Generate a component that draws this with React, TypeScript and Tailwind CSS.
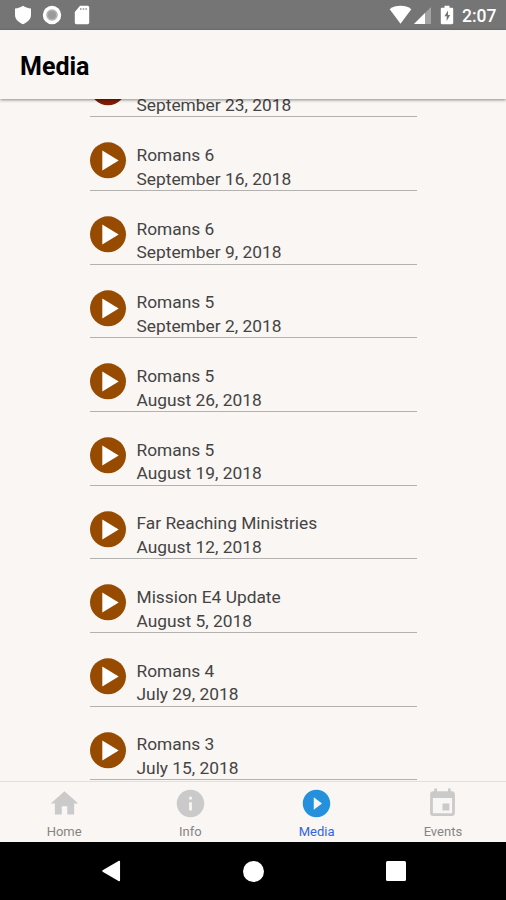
import type { ReactNode } from 'react'

type Sermon = { title: string; date: string }

const SERMONS: Sermon[] = [
  { title: 'Romans 6', date: 'September 23, 2018' },
  { title: 'Romans 6', date: 'September 16, 2018' },
  { title: 'Romans 6', date: 'September 9, 2018' },
  { title: 'Romans 5', date: 'September 2, 2018' },
  { title: 'Romans 5', date: 'August 26, 2018' },
  { title: 'Romans 5', date: 'August 19, 2018' },
  { title: 'Far Reaching Ministries', date: 'August 12, 2018' },
  { title: 'Mission E4 Update', date: 'August 5, 2018' },
  { title: 'Romans 4', date: 'July 29, 2018' },
  { title: 'Romans 3', date: 'July 15, 2018' },
]

function StatusBar() {
  return (
    <div className="flex h-[30px] shrink-0 items-center bg-[#757575] pl-[14px] pr-[8px] text-white">
      <svg width="18" height="20" viewBox="0 0 18 20" fill="#fff">
        <path d="M9 .8C7 2.2 4 3.2 1 3.6V10c0 4.2 3.5 7.4 8 9.2 4.5-1.8 8-5 8-9.2V3.600C14 3.200 11 2.200 9 .8z" />
      </svg>
      <svg className="ml-[10px]" width="20" height="20" viewBox="0 0 20 20">
        <circle cx="10" cy="10" r="9.200" fill="#fff" />
        <circle cx="10" cy="10" r="5.800" fill="#b3b3b3" />
        <circle cx="10" cy="10" r="4" fill="#9b9b9b" />
      </svg>
      <svg className="ml-[12px]" width="16" height="20" viewBox="0 0 16 20">
        <path d="M6 .8h7.500c1 0 1.700.7 1.700 1.700v15c0 1-.7 1.700-1.700 1.700h-11c-1 0-1.700-.7-1.700-1.700V7z" fill="#fff" />
        <path d="M6 3h1.500v2H6zM8.700 3h1.500v2H8.700zM11.400 3h1.500v2h-1.500z" fill="#aaa" />
      </svg>
      <div className="flex-1" />
      <svg width="23" height="20" viewBox="0 0 23 20" fill="#fff">
        <path d="M.7 4.200C3.700 1.800 7.300.8 11.500.8s7.800 1 10.800 3.400L11.500 18.800z" />
      </svg>
      <svg className="ml-[1px]" width="19" height="19" viewBox="0 0 19 19">
        <path d="M18 1v17H1z" fill="#a3a3a3" />
        <path d="M12 7v11H1z" fill="#fff" />
      </svg>
      <svg className="ml-[8px]" width="14" height="20" viewBox="0 0 14 20">
        <path d="M4.500.8h5v2H12c.7 0 1.200.5 1.200 1.200v14c0 .7-.5 1.200-1.200 1.200H2c-.7 0-1.200-.5-1.200-1.200V4c0-.7.5-1.200 1.200-1.200h2.500z" fill="#fff" />
        <path d="M8 5.500l-3.600 5.800h2.300V16l3.500-6H8z" fill="#757575" />
      </svg>
      <span className="ml-[8px] w-[36px] pt-[2px] text-[17.500px] leading-[30px] font-medium">2:07</span>
    </div>
  )
}

function PlayIcon({ color }: { color: string }) {
  return (
    <svg className="shrink-0" width="37" height="37" viewBox="0 0 37 37">
      <circle cx="18" cy="18.300" r="18" fill={color} />
      <path d="M12.300 8.600v19.800l16.400-9.900z" fill="#fff" />
    </svg>
  )
}

function SermonRow({ title, date, pressed }: Sermon & { pressed?: boolean }) {
  return (
    <div className="flex h-[73.700px] border-b border-[#b4b2b0] pt-[25px]">
      <PlayIcon color={pressed ? '#801c04' : '#964b00'} />
      <div className="ml-[10px] pt-[1.700px] text-[17.350px] leading-[23.700px] whitespace-nowrap text-[#444]">
        <div>{title}</div>
        <div>{date}</div>
      </div>
    </div>
  )
}

function Tab({ label, active, children }: { label: string; active?: boolean; children: ReactNode }) {
  return (
    <div className={`flex flex-1 flex-col items-center pt-[4.500px] ${active ? 'text-[#2f65e6]' : 'text-[#858585]'}`}>
      <svg width="33" height="33" viewBox="0 0 24 24" fill={active ? '#2590dc' : '#cacaca'}>
        {children}
      </svg>
      <span className="mt-[3px] text-[13px] leading-[18px]">{label}</span>
    </div>
  )
}

export default function App() {
  return (
    <div className="flex h-[900px] w-[506px] flex-col overflow-hidden bg-[#faf6f3] font-['Roboto',sans-serif]">
      <StatusBar />

      <header className="z-10 flex h-[69px] shrink-0 items-center bg-[#faf6f3] pt-[3px] pl-[20px] shadow-[0_1px_3px_rgba(0,0,0,0.45)]">
        <h1 className="text-[25px] leading-none font-bold text-black">Media</h1>
      </header>

      {/* List is scrolled, so the first row sits partly under the header */}
      <main className="h-[682px] shrink-0 overflow-hidden">
        <div className="mx-auto -mt-[55.500px] w-[327px]">
          {SERMONS.map((s, i) => (
            <SermonRow key={s.date} title={s.title} date={s.date} pressed={i === 0} />
          ))}
        </div>
      </main>

      <nav className="flex h-[61px] shrink-0 border-t border-[#e2dfdc] pl-[1px]">
        <Tab label="Home">
          <path d="M10 20v-6h4v6h5v-8h3L12 3 2 12h3v8z" />
        </Tab>
        <Tab label="Info">
          <path d="M12 2C6.480 2 2 6.480 2 12s4.480 10 10 10 10-4.480 10-10S17.520 2 12 2zm1 15h-2v-6h2v6zm0-8h-2V7h2v2z" />
        </Tab>
        <Tab label="Media" active>
          <path d="M12 2C6.480 2 2 6.480 2 12s4.480 10 10 10 10-4.480 10-10S17.520 2 12 2zm-2 14.500v-9l6 4.500-6 4.500z" />
        </Tab>
        <Tab label="Events">
          <path d="M17 12h-5v5h5v-5zM16 1v2H8V1H6v2H5c-1.110 0-1.990.9-1.990 2L3 19c0 1.100.89 2 2 2h14c1.100 0 2-.9 2-2V5c0-1.100-.9-2-2-2h-1V1h-2zm3 18H5V8h14v11z" />
        </Tab>
      </nav>

      {/* Android system buttons */}
      <div className="flex h-[58px] shrink-0 items-center justify-between bg-black pr-[100px] pl-[101px]">
        <svg width="20" height="22" viewBox="0 0 20 22">
          <path d="M18.300 1.500v19L2 11z" fill="#fff" stroke="#fff" strokeWidth="1.500" strokeLinejoin="round" />
        </svg>
        <div className="size-[21px] rounded-full bg-white" />
        <div className="size-[20px] rounded-[1.500px] bg-white" />
      </div>
    </div>
  )
}
